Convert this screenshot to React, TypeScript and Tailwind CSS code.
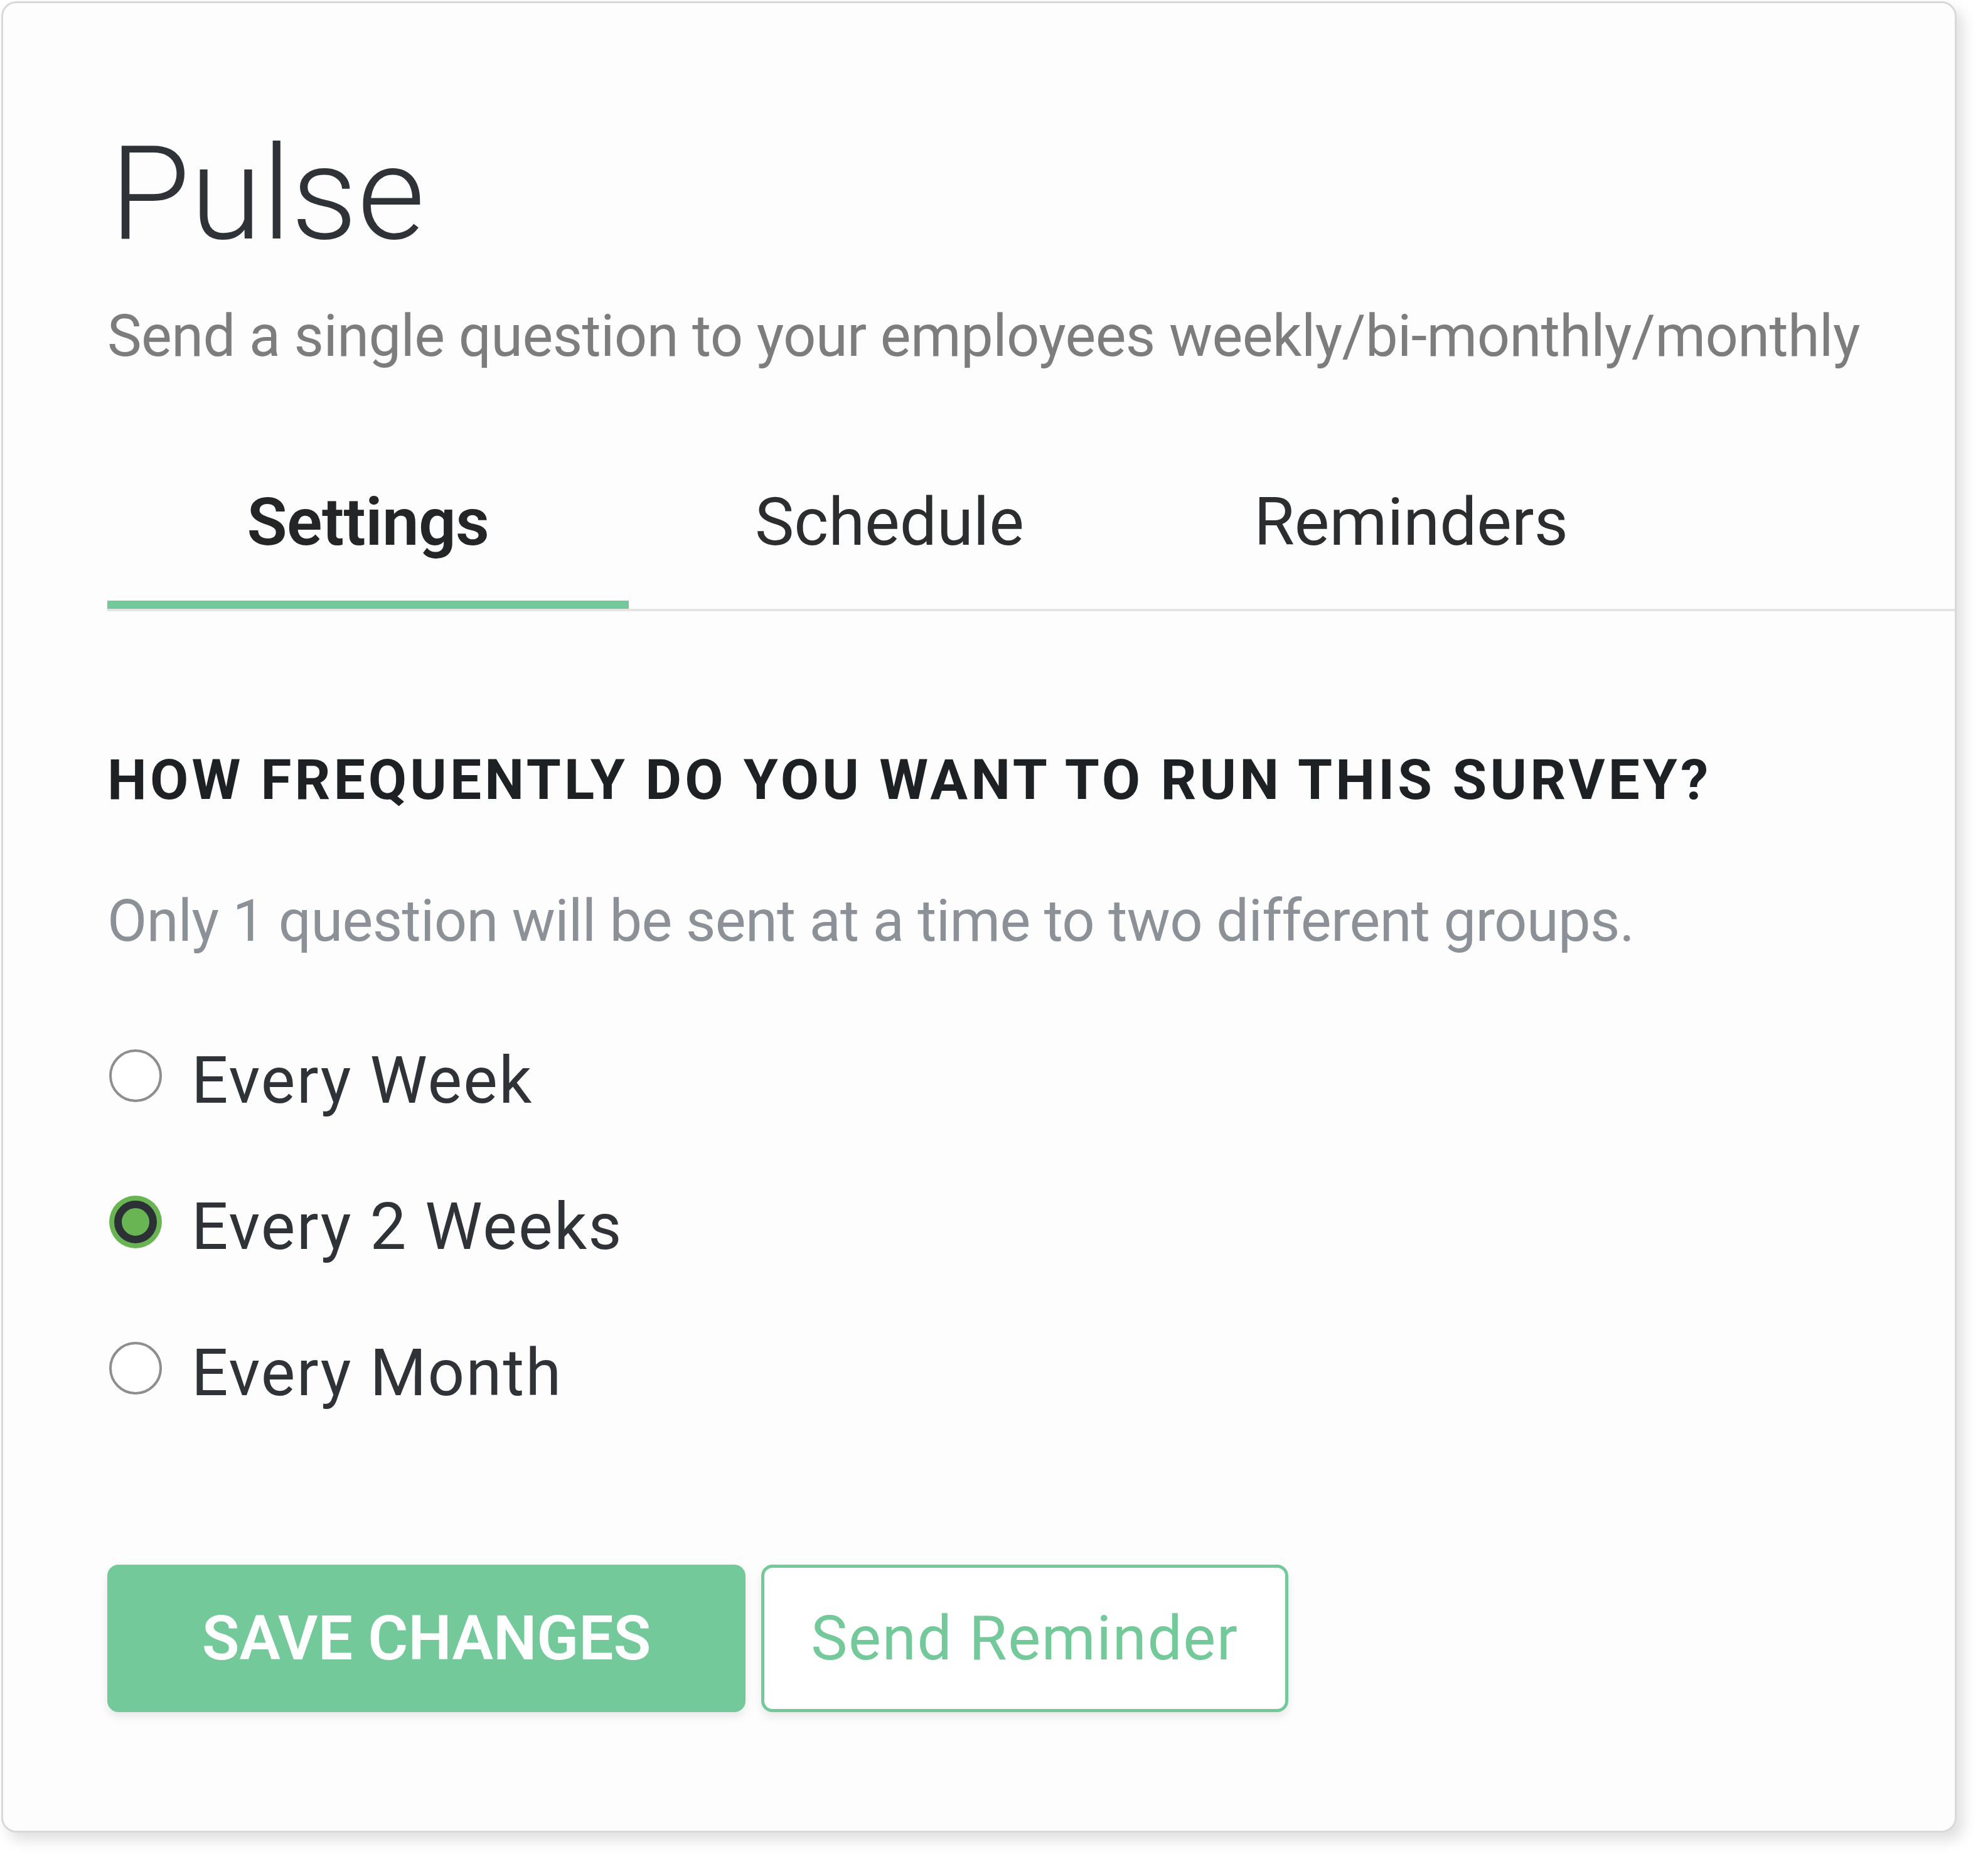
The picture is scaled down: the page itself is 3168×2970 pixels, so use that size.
import React from "react";

const font = { fontFamily: "Roboto, 'Open Sans', Arial, sans-serif" };

function Radio({ checked }: { checked: boolean }) {
  if (checked) {
    return (
      <div className="ml-[3px] mt-[2px] flex h-[84px] w-[84px] shrink-0 rounded-full bg-[#6ab553] p-[8px]">
        <div className="flex-1 rounded-full border-[12px] border-[#2c3136] bg-[#6ab553]" />
      </div>
    );
  }
  return (
    <div className="ml-[3px] mt-[2px] h-[84px] w-[84px] shrink-0 rounded-full border-[4px] border-[#8e8e8e] bg-white" />
  );
}

function Option({ label, checked }: { label: string; checked?: boolean }) {
  return (
    <div className="flex items-start">
      <Radio checked={!!checked} />
      <span className="ml-[47px] text-[103px] leading-[103px] tracking-[2.2px] text-[#2f3337]">
        {label}
      </span>
    </div>
  );
}

export default function App() {
  return (
    <div className="min-h-[2970px] w-[3168px] bg-white pl-[2px] pt-[2px]" style={font}>
      <div className="flex h-[2918px] w-[3116px] flex-col rounded-[24px] border-[3px] border-[#d9d9d9] bg-[#fdfdfd] pl-[166px] pt-[200px] shadow-[10px_12px_22px_rgba(0,0,0,0.13)]">
        <h1 className="ml-[4px] text-[208px] font-light leading-[208px] text-[#2f3337]">Pulse</h1>
        <p className="mt-[77px] text-[92px] leading-[92px] tracking-[-0.6px] text-[#7d7d7d]">
          Send a single question to your employees weekly/bi-monthly/monthly
        </p>

        <div className="mt-[198px] flex border-b-[4px] border-[#e4e4e4]">
          {[
            { t: "Settings", a: true },
            { t: "Schedule", a: false },
            { t: "Reminders", a: false },
          ].map((tab) => (
            <div key={tab.t} className="flex w-[831px] flex-col items-center">
              <span
                className={
                  tab.a
                    ? "pb-[72px] text-[105px] font-semibold leading-[105px] tracking-[-0.6px] text-[#232527]"
                    : "pb-[72px] text-[105px] font-normal leading-[105px] text-[#2b2d2f]"
                }
              >
                {tab.t}
              </span>
              <div className={tab.a ? "h-[13px] w-full bg-[#74c99a]" : "h-[13px] w-full"} />
            </div>
          ))}
        </div>

        <h2 className="mt-[224px] text-[89px] font-bold leading-[89px] tracking-[5.1px] text-[#1e2124]">
          HOW FREQUENTLY DO YOU WANT TO RUN THIS SURVEY?
        </h2>
        <p className="mt-[135px] text-[92px] leading-[92px] tracking-[-0.65px] text-[#8c9198]">
          Only 1 question will be sent at a time to two different groups.
        </p>

        <div className="mt-[156px] flex flex-col gap-[130px]">
          <Option label="Every Week" />
          <Option label="Every 2 Weeks" checked />
          <Option label="Every Month" />
        </div>

        <div className="mt-[254px] flex gap-[25px]">
          <button className="flex h-[235px] w-[1017px] items-center justify-center rounded-[18px] bg-[#74c99a] text-[98px] font-semibold text-white shadow-[0_8px_14px_rgba(0,0,0,0.08)]">
            SAVE CHANGES
          </button>
          <button className="flex h-[235px] w-[840px] items-center justify-center rounded-[18px] border-[5px] border-[#74c99a] bg-white text-[98px] font-normal tracking-[1.6px] text-[#74c99a] shadow-[0_8px_14px_rgba(0,0,0,0.08)]">
            Send Reminder
          </button>
        </div>
      </div>
    </div>
  );
}
